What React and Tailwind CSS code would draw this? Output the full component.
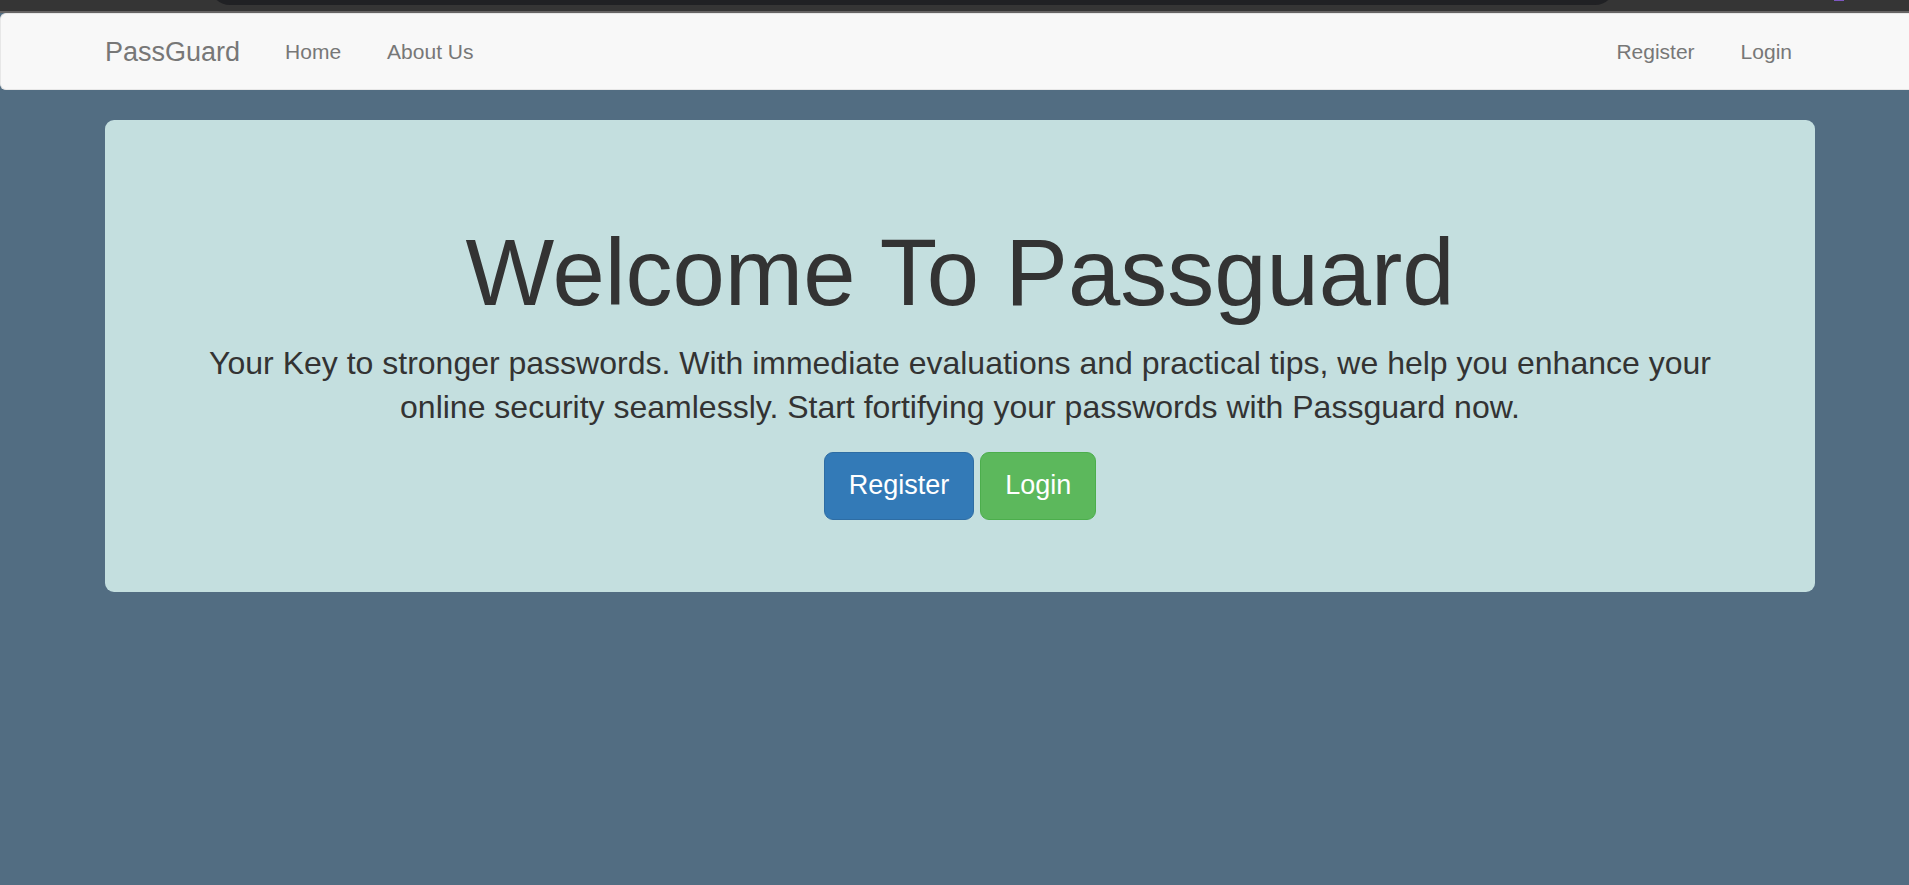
const navLink = "block px-[23px] text-[21px] leading-[30px] text-[#777777] hover:text-[#333333]";
const button = "h-[68px] rounded-[9px] border px-6 pb-0.5 text-[27px] leading-9 text-white";

function BrowserEdge() {
  return (
    <div className="h-[13px] overflow-hidden border-b-2 border-[#666464] bg-[#353535] pl-[210px] pr-[294px]">
      <div className="flex items-start">
        <div className="-mt-[35px] h-10 flex-1 rounded-full bg-[#202124]" />
        <div className="relative w-0">
          <span className="absolute left-[219px] top-0 h-px w-[10px] bg-[#7e57c2]" />
        </div>
      </div>
    </div>
  );
}

function Navbar() {
  return (
    <nav className="flex h-[77px] items-center rounded-l-md border border-r-0 border-[#e7e7e7] bg-[#f8f8f8] pl-[104px] pr-[94px]">
      <a href="#" className="mr-[22px] text-[27px] leading-[30px] text-[#777777]">
        PassGuard
      </a>
      <ul className="flex">
        <li><a href="#home" className={navLink}>Home</a></li>
        <li><a href="#about" className={navLink}>About Us</a></li>
      </ul>
      <ul className="ml-auto flex">
        <li><a href="#register" className={navLink}>Register</a></li>
        <li><a href="#login" className={navLink}>Login</a></li>
      </ul>
    </nav>
  );
}

export default function App() {
  return (
    <div className="min-h-screen bg-[#526d82] font-['Liberation_Sans',Arial,sans-serif] text-[#333333]">
      <BrowserEdge />
      <Navbar />
      <main className="pl-[105px] pr-[94px] pt-[30px]">
        <section className="rounded-[9px] bg-[#c4dfdf] px-[90px] pb-[72px] pt-[101px] text-center">
          <h1 className="mb-4 text-[94px] leading-[104px]">Welcome To Passguard</h1>
          <p className="mb-[23px] text-[32px] leading-[44px]">
            Your Key to stronger passwords. With immediate evaluations and practical tips, we help you
            enhance your online security seamlessly. Start fortifying your passwords with Passguard now.
          </p>
          <div className="flex justify-center gap-[6px]">
            <button type="button" className={`${button} border-[#2e6da4] bg-[#337ab7]`}>Register</button>
            <button type="button" className={`${button} border-[#4cae4c] bg-[#5cb85c]`}>Login</button>
          </div>
        </section>
      </main>
    </div>
  );
}
